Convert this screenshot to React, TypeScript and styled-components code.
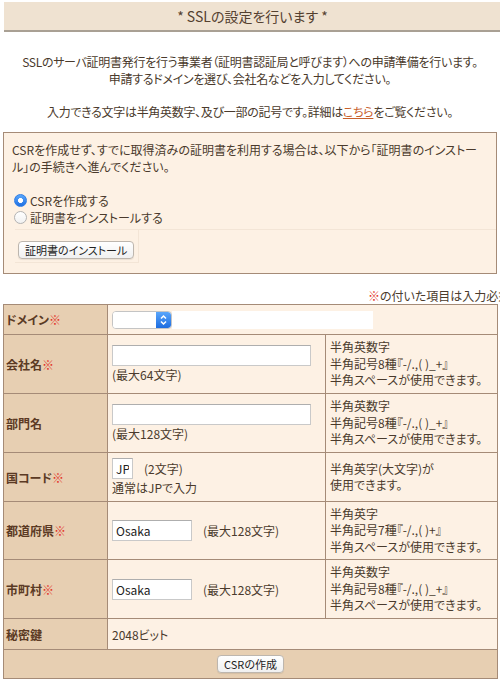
import React from 'react';
import styled, { createGlobalStyle } from 'styled-components';

const C = {
  text: '#4a3a2c',
  label: '#5b3a24',
  border: '#a58b77',
  labelBg: '#e7cfb2',
  cellBg: '#fdf1e4',
  red: '#e3342a',
  link: '#c8602b',
};

const GlobalStyle = createGlobalStyle`
  html, body { margin: 0; padding: 0; background: #fff; overflow: hidden; }
  body {
    font-family: "Noto Sans CJK JP", "Noto Sans", sans-serif;
    font-size: 12px;
    color: ${C.text};
    font-feature-settings: "palt";
  }
`;

const Page = styled.div`
  width: 494px;
  padding: 2px 3px 0 3px;
`;

const Header = styled.div`
  margin: 0 -12px 0 1px;
  height: 28px;
  background: #efe2d1;
  border-bottom: 2px solid #a9a094;
  display: flex;
  align-items: center;
  justify-content: center;
  padding-right: 8px;
  font-size: 14px;
  color: #54402f;
`;

const Intro = styled.div`
  margin-top: 22px;
  text-align: center;
  line-height: 16.5px;
  white-space: nowrap;
  letter-spacing: -0.3px;
`;

const Link = styled.a`
  color: ${C.link};
  text-decoration: underline;
`;

const Box = styled.div`
  margin-top: 12px;
  border: 1px solid ${C.border};
  background: ${C.cellBg};
  padding: 8px 0 10px 8px;
`;

const Para = styled.p`
  margin: 0 0 17px 0;
  padding-right: 14px;
  line-height: 17px;
`;

const RadioLine = styled.label`
  display: flex;
  align-items: center;
  height: 17px;
  gap: 3px;
`;

const Radio = styled.input.attrs({ type: 'radio' })`
  appearance: none;
  margin: 0 0 0 2px;
  width: 13px;
  height: 13px;
  border-radius: 50%;
  box-sizing: border-box;
  border: 1px solid #b3b3b3;
  background: linear-gradient(#ffffff, #f1f1f1);
  &:checked {
    border-color: #2f7ee6;
    background: radial-gradient(circle, #fff 0 2.2px, transparent 2.6px),
      linear-gradient(#5aa7fb, #1f6fe2);
  }
`;

const ActionRow = styled.div`
  margin: 3px 0 0 3px;
  border-top: 1px solid #f3e5d6;
  display: flex;
`;

const ActionCell = styled.div`
  padding: 11px 4px 3px 3px;
  border-right: 1px solid #f3e5d6;
  border-bottom: 1px solid #f3e5d6;
`;

const Button = styled.button`
  height: 18px;
  padding: 0 6px;
  border: 1px solid #bdb6ae;
  border-radius: 4px;
  background: linear-gradient(#ffffff, #f0f0f0);
  box-shadow: 0 1px 1px rgba(0, 0, 0, 0.08);
  font-family: "Noto Sans CJK JP", sans-serif;
  font-size: 11px;
  color: #222;
  line-height: 16px;
  font-feature-settings: "palt";
`;

const RequiredNote = styled.div`
  margin: 14px -40px 0 0;
  text-align: right;
  line-height: 16px;
  white-space: nowrap;
`;

const Req = styled.span`
  color: ${C.red};
`;

const Table = styled.table`
  width: 494px;
  border-collapse: collapse;
  table-layout: fixed;
  border: 1px solid ${C.border};
`;

const Row = styled.tr<{ $h: number }>`
  height: ${(p) => p.$h}px;
`;

const LabelCell = styled.th`
  background: ${C.labelBg};
  color: ${C.label};
  font-weight: bold;
  text-align: left;
  padding: 0 2px;
  border: 1px solid ${C.border};
  vertical-align: middle;
  white-space: nowrap;
`;

const InputCell = styled.td`
  background: ${C.cellBg};
  padding: 0 4px;
  border: 1px solid ${C.border};
  vertical-align: middle;
  line-height: 17px;
`;

const NoteCell = styled.td`
  background: ${C.cellBg};
  padding: 0 4px;
  border: 1px solid ${C.border};
  vertical-align: middle;
  line-height: 16.5px;
`;

const FooterCell = styled.td`
  background: ${C.labelBg};
  border: 1px solid ${C.border};
  text-align: center;
  vertical-align: middle;
`;

const NoteLine = styled.div`
  white-space: nowrap;
`;

const InputLine = styled.div`
  display: flex;
  align-items: center;
  gap: 11px;
`;

const TextInput = styled.input<{ $w: number }>`
  width: ${(p) => p.$w}px;
  height: 21px;
  box-sizing: border-box;
  margin: 0;
  border: 1px solid #c9c9c9;
  border-top-color: #aeaeae;
  padding: 0 3px;
  background: #fff;
  font-family: "Noto Sans CJK JP", sans-serif;
  font-size: 12px;
  color: #222;
`;

const SelectWrap = styled.div`
  display: flex;
  align-items: center;
`;

const SelectFrame = styled.div`
  display: flex;
  width: 60px;
  height: 18px;
  box-sizing: border-box;
  border: 1px solid #c4c4c4;
  border-radius: 4px;
  background: #fff;
  overflow: hidden;
`;

const NativeSelect = styled.select`
  appearance: none;
  flex: 1;
  border: none;
  margin: 0;
  padding: 0;
  background: #fff;
  outline: none;
`;

const Stepper = styled.span`
  width: 15px;
  display: flex;
  align-items: center;
  justify-content: center;
  background: linear-gradient(#5aa6fb, #1c6ce0);
  border-radius: 0 3px 3px 0;
`;

const BlankField = styled.div`
  width: 201px;
  height: 18px;
  background: #fff;
`;

const notes8 = ['半角英数字', '半角記号8種『-/.,( )_+』', '半角スペースが使用できます。'];
const notes7 = ['半角英字', '半角記号7種『-/.,( )+』', '半角スペースが使用できます。'];

function Notes({ lines }: { lines: string[] }) {
  return (
    <NoteCell>
      {lines.map((l) => (
        <NoteLine key={l}>{l}</NoteLine>
      ))}
    </NoteCell>
  );
}

export default function App() {
  return (
    <>
      <GlobalStyle />
      <Page>
        <Header>* SSLの設定を行います *</Header>
        <Intro>
          SSLのサーバ証明書発行を行う事業者（証明書認証局と呼びます）への申請準備を行います。
          <br />
          申請するドメインを選び、会社名などを入力してください。
          <br />
          <br />
          入力できる文字は半角英数字、及び一部の記号です。詳細は<Link href="#">こちら</Link>をご覧ください。
        </Intro>

        <Box>
          <Para>
            CSRを作成せず、すでに取得済みの証明書を利用する場合は、以下から「証明書のインストール」の手続きへ進んでください。
          </Para>
          <RadioLine>
            <Radio name="mode" defaultChecked />
            CSRを作成する
          </RadioLine>
          <RadioLine>
            <Radio name="mode" />
            証明書をインストールする
          </RadioLine>
          <ActionRow>
            <ActionCell>
              <Button>証明書のインストール</Button>
            </ActionCell>
          </ActionRow>
        </Box>

        <RequiredNote>
          <Req>※</Req>の付いた項目は入力必須です。
        </RequiredNote>

        <Table>
          <colgroup>
            <col style={{ width: 104 }} />
            <col style={{ width: 218 }} />
            <col style={{ width: 172 }} />
          </colgroup>
          <tbody>
            <Row $h={30}>
              <LabelCell>
                ドメイン<Req>※</Req>
              </LabelCell>
              <InputCell colSpan={2}>
                <SelectWrap>
                  <SelectFrame>
                    <NativeSelect />
                    <Stepper>
                      <svg width="9" height="12" viewBox="0 0 9 12">
                        <path d="M2 4.5 L4.5 2 L7 4.5 M2 7.5 L4.5 10 L7 7.5" fill="none" stroke="#fff" strokeWidth="1.5" />
                      </svg>
                    </Stepper>
                  </SelectFrame>
                  <BlankField />
                </SelectWrap>
              </InputCell>
            </Row>
            <Row $h={59}>
              <LabelCell>
                会社名<Req>※</Req>
              </LabelCell>
              <InputCell>
                <TextInput $w={199} />
                <div>(最大64文字)</div>
              </InputCell>
              <Notes lines={notes8} />
            </Row>
            <Row $h={59}>
              <LabelCell>部門名</LabelCell>
              <InputCell>
                <TextInput $w={199} />
                <div>(最大128文字)</div>
              </InputCell>
              <Notes lines={notes8} />
            </Row>
            <Row $h={49}>
              <LabelCell>
                国コード<Req>※</Req>
              </LabelCell>
              <InputCell>
                <InputLine>
                  <TextInput $w={21} defaultValue="JP" />
                  <span>(2文字)</span>
                </InputLine>
                <div>通常はJPで入力</div>
              </InputCell>
              <Notes lines={['半角英字(大文字)が', '使用できます。']} />
            </Row>
            <Row $h={58}>
              <LabelCell>
                都道府県<Req>※</Req>
              </LabelCell>
              <InputCell>
                <InputLine>
                  <TextInput $w={80} defaultValue="Osaka" />
                  <span>(最大128文字)</span>
                </InputLine>
              </InputCell>
              <Notes lines={notes7} />
            </Row>
            <Row $h={59}>
              <LabelCell>
                市町村<Req>※</Req>
              </LabelCell>
              <InputCell>
                <InputLine>
                  <TextInput $w={80} defaultValue="Osaka" />
                  <span>(最大128文字)</span>
                </InputLine>
              </InputCell>
              <Notes lines={notes8} />
            </Row>
            <Row $h={31}>
              <LabelCell>秘密鍵</LabelCell>
              <InputCell colSpan={2}>2048ビット</InputCell>
            </Row>
            <Row $h={29}>
              <FooterCell colSpan={3}>
                <Button>CSRの作成</Button>
              </FooterCell>
            </Row>
          </tbody>
        </Table>
      </Page>
    </>
  );
}
